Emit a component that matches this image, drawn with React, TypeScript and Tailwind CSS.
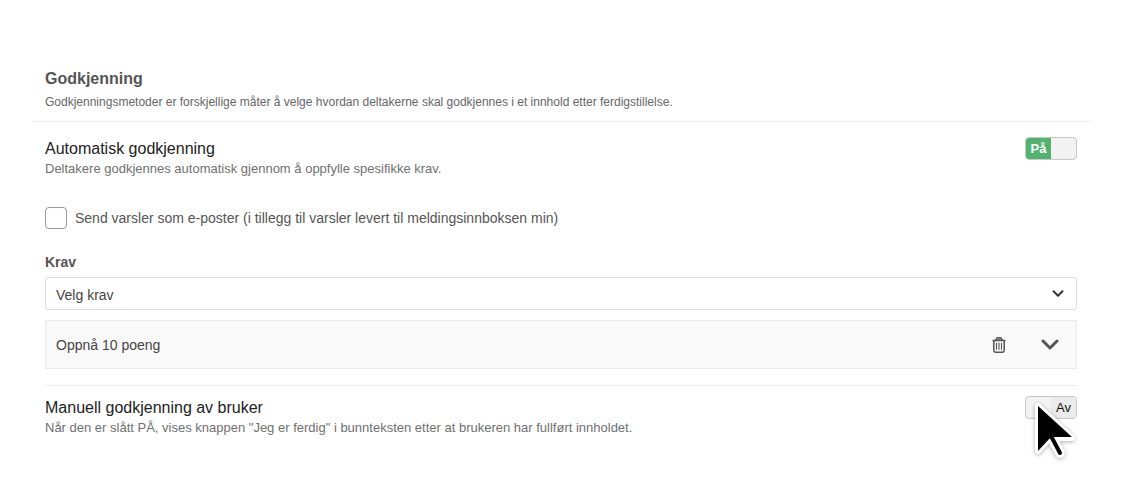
import React, { useState } from "react";

const Toggle = ({ label, defaultOn }: { label: string; defaultOn: boolean }) => {
  const [on, setOn] = useState(defaultOn);

  return (
    <button
      type="button"
      role="switch"
      aria-checked={on}
      aria-label={label}
      onClick={() => setOn(!on)}
      className="flex h-[23px] w-[52px] shrink-0 cursor-pointer overflow-hidden rounded-[4px] border border-[#c8c8c8] bg-[#f3f3f3] text-[13px] leading-[21px]"
    >
      {on ? (
        <span className="w-[25px] bg-[#51b36d] text-center font-bold text-white">På</span>
      ) : (
        <span className="ml-auto w-[25px] bg-[#ebebeb] text-center text-[#111]">Av</span>
      )}
    </button>
  );
};

const TrashIcon = () => (
  <svg width="14" height="16" viewBox="0 0 14 16" fill="none" stroke="#555" aria-hidden="true">
    <path d="M0.5 3.5h13" strokeWidth="1.5" />
    <path d="M3.4 3.2l1.2-2q.3-.5.9-.5h3q.6 0 .9.5l1.2 2z" fill="#999" strokeWidth="1.2" />
    <path d="M1.8 3.5v9.8q0 2 2 2h6.4q2 0 2-2V3.5" strokeWidth="1.5" />
    <path d="M4.5 5.8v7M7 5.8v7M9.5 5.8v7" strokeWidth="1.1" />
  </svg>
);

const Chevron = ({ className }: { className: string }) => (
  <svg viewBox="0 0 18 11" fill="none" stroke="currentColor" className={className} aria-hidden="true">
    <path d="M2 2l7 7 7-7" strokeWidth="3" strokeLinecap="round" strokeLinejoin="round" />
  </svg>
);

const Pointer = () => (
  <svg
    width="44"
    height="60"
    viewBox="0 0 44 60"
    className="pointer-events-none absolute top-1 left-2 drop-shadow-[0_1px_2px_rgba(0,0,0,0.3)]"
    aria-hidden="true"
  >
    <g strokeLinejoin="round" strokeLinecap="round">
      <path d="M5 6v45l12-13h22z" fill="#fff" stroke="#fff" strokeWidth="6" />
      <path d="M18 36l9 17" stroke="#fff" strokeWidth="10" />
      <path d="M18 36l9 17" stroke="#000" strokeWidth="4" />
    </g>
    <path d="M5 6v45l13-14h21z" fill="#000" />
  </svg>
);

const App = () => {
  return (
    <main className="bg-white px-8 pt-[69px] pb-16 font-['Liberation_Sans',Arial,sans-serif] text-sm text-[#555]">
      <header className="border-b border-[#ebebeb] px-[13px] pb-[9px]">
        <h1 className="text-base leading-5 font-bold">Godkjenning</h1>
        <p className="mt-[3px] text-xs leading-5 text-[#666]">
          Godkjenningsmetoder er forskjellige måter å velge hvordan deltakerne skal godkjennes i et
          innhold etter ferdigstillelse.
        </p>
      </header>

      <div className="pr-[14px] pl-[13px]">
        <section className="border-b border-[#ebebeb] pt-[15px] pb-4">
          <div className="flex items-start justify-between">
            <div className="pt-[2px]">
              <h2 className="text-base leading-5 text-[#222]">Automatisk godkjenning</h2>
              <p className="text-[13px] leading-5 text-[#707070]">
                Deltakere godkjennes automatisk gjennom å oppfylle spesifikke krav.
              </p>
            </div>
            <Toggle label="Automatisk godkjenning" defaultOn={true} />
          </div>

          <label className="mt-7 flex items-center gap-2">
            <input
              type="checkbox"
              className="size-[22px] appearance-none rounded-[4px] border border-[#999] bg-white checked:bg-[#51b36d]"
            />
            Send varsler som e-poster (i tillegg til varsler levert til meldingsinnboksen min)
          </label>

          <label htmlFor="krav" className="mt-[23px] block leading-5 font-bold">
            Krav
          </label>
          <div className="relative mt-[5px]">
            <select
              id="krav"
              className="block h-[33px] w-full appearance-none rounded-[3px] border border-[#ddd] bg-white px-[10px] pt-[2px] text-[#444]"
            >
              <option>Velg krav</option>
            </select>
            <Chevron className="pointer-events-none absolute top-[13px] right-[13px] h-[7px] w-3 text-[#333]" />
          </div>

          <div className="mt-[10px] flex h-[49px] items-center border border-[#ebebeb] bg-[#f9f9f9] px-[10px] text-[#444]">
            <span className="grow">Oppnå 10 poeng</span>
            <button type="button" aria-label="Slett krav" className="mr-[35px] cursor-pointer">
              <TrashIcon />
            </button>
            <button type="button" aria-label="Vis krav" className="mr-[7px] cursor-pointer">
              <Chevron className="h-[11px] w-[18px] text-[#555]" />
            </button>
          </div>
        </section>

        <section className="flex items-start justify-between pt-[10px]">
          <div className="pt-[2px]">
            <h2 className="text-base leading-5 text-[#222]">Manuell godkjenning av bruker</h2>
            <p className="text-[13px] leading-5 text-[#707070]">
              Når den er slått PÅ, vises knappen "Jeg er ferdig" i bunnteksten etter at brukeren har
              fullført innholdet.
            </p>
          </div>
          <div className="relative">
            <Toggle label="Manuell godkjenning av bruker" defaultOn={false} />
            <Pointer />
          </div>
        </section>
      </div>
    </main>
  );
};

export default App;
